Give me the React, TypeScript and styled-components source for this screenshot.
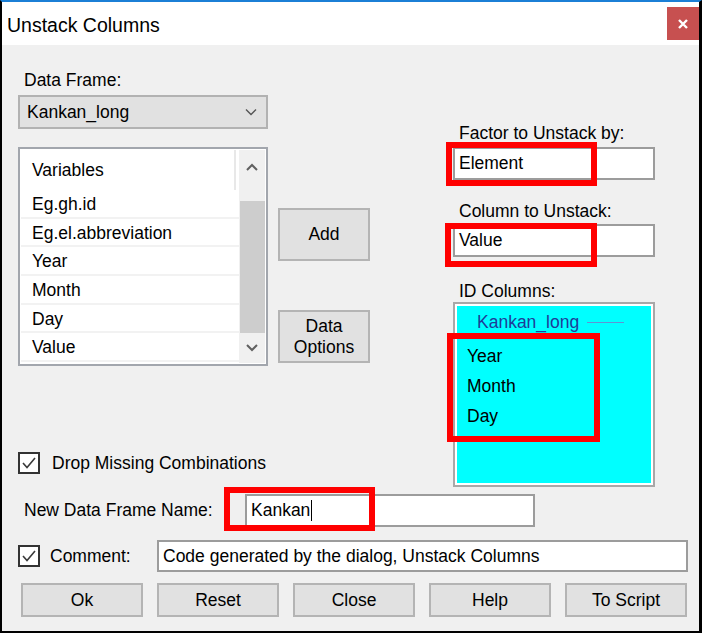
import React from 'react'
import styled, { createGlobalStyle } from 'styled-components'

const GlobalStyle = createGlobalStyle`
  html, body {
    margin: 0;
    padding: 0;
    background: #ffffff;
  }
  body {
    font-family: "Liberation Sans", Arial, sans-serif;
    font-size: 17.5px;
    color: #000;
  }
`

const variables = ['Eg.gh.id', 'Eg.el.abbreviation', 'Year', 'Month', 'Day', 'Value']
const idColumns = ['Year', 'Month', 'Day']
const footerButtons = ['Ok', 'Reset', 'Close', 'Help', 'To Script']

const Check = () => (
  <CheckBox>
    <svg width="18" height="18" viewBox="0 0 18 18">
      <polyline points="3,9 7,13.5 15,4" fill="none" stroke="#3a3a3a" strokeWidth="1.6" />
    </svg>
  </CheckBox>
)

const Chevron = ({ up }: { up?: boolean }) => (
  <svg width="12" height="8" viewBox="0 0 12 8">
    <polyline
      points={up ? '1,7 6,2 11,7' : '1,1 6,6 11,1'}
      fill="none"
      stroke="#606060"
      strokeWidth="2"
    />
  </svg>
)

export default function App() {
  return (
    <>
      <GlobalStyle />
      <Window>
        <TitleBar>
          <Title>Unstack Columns</Title>
          <CloseButton>
            <svg width="12" height="12" viewBox="0 0 12 12">
              <path d="M2 2 L10 10 M10 2 L2 10" stroke="#fff" strokeWidth="2.4" />
            </svg>
          </CloseButton>
        </TitleBar>

        <Body>
          <TopSection>
            <LeftArea>
              <FieldLabel>Data Frame:</FieldLabel>
              <ComboBox>
                <span>Kankan_long</span>
                <svg width="12" height="8" viewBox="0 0 12 8">
                  <polyline points="1,1.5 6,6.5 11,1.5" fill="none" stroke="#555" strokeWidth="1.4" />
                </svg>
              </ComboBox>

              <ListRow>
                <ListBox>
                  <ListContent>
                    <ListHeader>
                      <HeaderCell>Variables</HeaderCell>
                    </ListHeader>
                    {variables.map(v => (
                      <ListItem key={v}>{v}</ListItem>
                    ))}
                  </ListContent>
                  <ScrollBar>
                    <ScrollArrow $h={33}>
                      <Chevron up />
                    </ScrollArrow>
                    <ScrollTrack>
                      <ScrollThumb />
                    </ScrollTrack>
                    <ScrollArrow $h={30}>
                      <Chevron />
                    </ScrollArrow>
                  </ScrollBar>
                </ListBox>

                <SideButtons>
                  <DialogButton $w={92} $h={53} $top={61}>Add</DialogButton>
                  <DialogButton $w={92} $h={53} $top={49}>
                    Data
                    <br />
                    Options
                  </DialogButton>
                </SideButtons>
              </ListRow>

              <CheckRow>
                <Check />
                <CheckText>Drop Missing Combinations</CheckText>
              </CheckRow>
            </LeftArea>

            <RightArea>
              <FieldLabel>Factor to Unstack by:</FieldLabel>
              <TextBox $w={202} $top={4}>
                Element
                <Highlight $l={-9} $t={-7} $w={151} $h={44} />
              </TextBox>

              <FieldLabel $top={21}>Column to Unstack:</FieldLabel>
              <TextBox $w={202} $top={3}>
                Value
                <Highlight $l={-10} $t={-3} $w={152} $h={44} />
              </TextBox>

              <FieldLabel $top={24}>ID Columns:</FieldLabel>
              <IdList>
                <GroupHeader>
                  <span>Kankan_long</span>
                  <GroupLine />
                </GroupHeader>
                <IdItems>
                  {idColumns.map(c => (
                    <IdItem key={c}>{c}</IdItem>
                  ))}
                </IdItems>
                <Highlight $l={-8} $t={29} $w={153} $h={109} />
              </IdList>
            </RightArea>
          </TopSection>

          <NameRow>
            <NameLabel>New Data Frame Name:</NameLabel>
            <TextBox $w={290}>
              Kankan
              <Caret />
              <Highlight $l={-23} $t={-9} $w={151} $h={44} />
            </TextBox>
          </NameRow>

          <CommentRow>
            <Check />
            <CommentLabel>Comment:</CommentLabel>
            <TextBox $w={531} $h={32}>
              Code generated by the dialog, Unstack Columns
            </TextBox>
          </CommentRow>

          <ButtonRow>
            {footerButtons.map(b => (
              <DialogButton key={b} $w={122} $h={34}>
                {b}
              </DialogButton>
            ))}
          </ButtonRow>
        </Body>
      </Window>
    </>
  )
}

const Window = styled.div`
  box-sizing: border-box;
  width: 702px;
  height: 633px;
  display: flex;
  flex-direction: column;
  border-top: 2px solid #1b7fd6;
  border-left: 2px solid #000;
  border-right: 3px solid #000;
  border-bottom: 2px solid #000;
  background: #f0f0f0;
`

const TitleBar = styled.div`
  display: flex;
  justify-content: space-between;
  align-items: flex-start;
  height: 43px;
  background: #ffffff;
`

const Title = styled.div`
  padding: 12px 0 0 5px;
  font-size: 19.5px;
  line-height: 23px;
  color: #000;
`

const CloseButton = styled.div`
  display: flex;
  align-items: center;
  justify-content: center;
  width: 32px;
  height: 33px;
  margin-top: 5px;
  background: #c75050;
`

const Body = styled.div`
  flex: 1;
  display: flex;
  flex-direction: column;
  background: #f0f0f0;
`

const TopSection = styled.div`
  display: flex;
  align-items: flex-start;
  height: 442px;
  padding-left: 16px;
`

const LeftArea = styled.div`
  display: flex;
  flex-direction: column;
  width: 352px;
  padding-top: 25px;
`

const FieldLabel = styled.div<{ $top?: number }>`
  margin-top: ${p => p.$top ?? 0}px;
  padding-left: 6px;
  line-height: 20px;
  height: 20px;
  white-space: nowrap;
`

const ComboBox = styled.div`
  box-sizing: border-box;
  display: flex;
  align-items: center;
  justify-content: space-between;
  width: 250px;
  height: 34px;
  margin-top: 5px;
  padding: 0 9px 0 7px;
  border: 2px solid #b2b2b2;
  background: #e1e1e1;
`

const ListRow = styled.div`
  display: flex;
  gap: 10px;
  margin-top: 18px;
`

const ListBox = styled.div`
  box-sizing: border-box;
  display: flex;
  width: 250px;
  height: 219px;
  padding: 1px;
  border: 2px solid #a2a6ad;
  background: #ffffff;
`

const ListContent = styled.div`
  flex: 1;
  overflow: hidden;
`

const ListHeader = styled.div`
  height: 40px;
  display: flex;
`

const HeaderCell = styled.div`
  box-sizing: border-box;
  width: 215px;
  height: 40px;
  padding-left: 11px;
  line-height: 40px;
  border-right: 2px solid #e8e8e8;
`

const ListItem = styled.div`
  box-sizing: border-box;
  height: 28.7px;
  padding-left: 11px;
  line-height: 29px;
  border-bottom: 2px solid #f2f2f2;
  white-space: nowrap;
`

const ScrollBar = styled.div`
  display: flex;
  flex-direction: column;
  width: 26px;
  background: #f0f0f0;
`

const ScrollArrow = styled.div<{ $h: number }>`
  display: flex;
  align-items: center;
  justify-content: center;
  height: ${p => p.$h}px;
`

const ScrollTrack = styled.div`
  flex: 1;
`

const ScrollThumb = styled.div`
  height: 132px;
  margin: 18px 0 0 1px;
  background: #cdcdcd;
`

const SideButtons = styled.div`
  display: flex;
  flex-direction: column;
`

const DialogButton = styled.div<{ $w: number; $h: number; $top?: number }>`
  box-sizing: border-box;
  display: flex;
  align-items: center;
  justify-content: center;
  width: ${p => p.$w}px;
  height: ${p => p.$h}px;
  margin-top: ${p => p.$top ?? 0}px;
  border: 2px solid #b4b4b4;
  background: #e1e1e1;
  text-align: center;
  line-height: 21px;
`

const CheckRow = styled.div`
  display: flex;
  align-items: center;
  height: 22px;
  margin-top: 86px;
`

const CheckBox = styled.div`
  box-sizing: border-box;
  display: flex;
  align-items: center;
  justify-content: center;
  width: 22px;
  height: 22px;
  border: 2px solid #333;
  background: #ffffff;
`

const CheckText = styled.span`
  margin-left: 12px;
  white-space: nowrap;
`

const RightArea = styled.div`
  display: flex;
  flex-direction: column;
  width: 202px;
  margin-left: 83px;
  padding-top: 78px;
`

const TextBox = styled.div<{ $w: number; $h?: number; $top?: number }>`
  position: relative;
  box-sizing: border-box;
  display: flex;
  align-items: center;
  width: ${p => p.$w}px;
  height: ${p => p.$h ?? 33}px;
  margin-top: ${p => p.$top ?? 0}px;
  padding-left: 4px;
  border: 2px solid #9c9c9c;
  background: #ffffff;
  white-space: nowrap;
`

const Caret = styled.span`
  display: inline-block;
  width: 1px;
  height: 21px;
  margin-left: 1px;
  background: #000;
`

const Highlight = styled.div<{ $l: number; $t: number; $w: number; $h: number }>`
  position: absolute;
  left: ${p => p.$l}px;
  top: ${p => p.$t}px;
  width: ${p => p.$w}px;
  height: ${p => p.$h}px;
  box-sizing: border-box;
  border: 6px solid #ff0000;
  pointer-events: none;
`

const IdList = styled.div`
  position: relative;
  box-sizing: border-box;
  height: 185px;
  margin-top: 1px;
  border: 2px solid #a8a8a8;
  box-shadow: inset 0 0 0 2px #ffffff;
  background: #00ffff;
`

const GroupHeader = styled.div`
  display: flex;
  align-items: center;
  height: 20px;
  margin-top: 8px;
  padding-left: 22px;
  color: #1f3c98;
`

const GroupLine = styled.span`
  width: 37px;
  height: 1px;
  margin-left: 8px;
  background: #5f93d3;
`

const IdItems = styled.div`
  margin-top: 9px;
`

const IdItem = styled.div`
  height: 30px;
  line-height: 30px;
  padding-left: 12px;
`

const NameRow = styled.div`
  display: flex;
  align-items: center;
  margin-top: 7px;
  padding-left: 22px;
`

const NameLabel = styled.span`
  width: 221px;
  white-space: nowrap;
`

const CommentRow = styled.div`
  display: flex;
  align-items: center;
  margin-top: 13px;
  padding-left: 16px;
`

const CommentLabel = styled.span`
  width: 107px;
  margin-left: 10px;
`

const ButtonRow = styled.div`
  display: flex;
  justify-content: space-between;
  margin-top: 11px;
  padding: 0 12px 0 19px;
`
